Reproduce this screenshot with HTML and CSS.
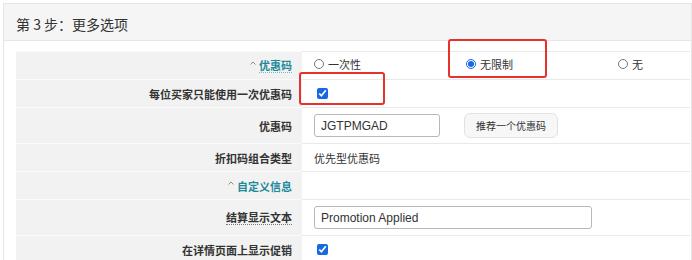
FILE: index.html
```html
<!DOCTYPE html>
<html>
<head>
  <meta charset="UTF-8">
  <title>更多选项</title>
  <link rel="stylesheet" href="styles.css">
</head>
<body>
  <div class="panel">
    <div class="panel-head">第 3 步：更多选项</div>
    <div class="panel-body">
      <div class="row">
        <div class="row-label">
          <svg class="caret" width="6" height="4" viewBox="0 0 6 4"><polyline points="0.5,3.5 3,1 5.5,3.5" fill="none" stroke="#8a8a8a" stroke-width="1"/></svg>
          <a href="#" class="toggle">优惠码</a>
        </div>
        <div class="row-value">
          <div class="choices">
            <label class="choice"><input type="radio" name="usage"> 一次性</label>
            <label class="choice"><input type="radio" name="usage" checked> 无限制</label>
            <label class="choice"><input type="radio" name="usage"> 无</label>
          </div>
        </div>
      </div>
      <div class="row">
        <div class="row-label">每位买家只能使用一次优惠码</div>
        <div class="row-value"><input type="checkbox" class="check" checked></div>
      </div>
      <div class="row row-tall">
        <div class="row-label">优惠码</div>
        <div class="row-value">
          <input type="text" class="text-input code-input" value="JGTPMGAD">
          <button type="button" class="btn">推荐一个优惠码</button>
        </div>
      </div>
      <div class="row">
        <div class="row-label">折扣码组合类型</div>
        <div class="row-value">优先型优惠码</div>
      </div>
      <div class="row">
        <div class="row-label">
          <svg class="caret" width="6" height="4" viewBox="0 0 6 4"><polyline points="0.5,3.5 3,1 5.5,3.5" fill="none" stroke="#8a8a8a" stroke-width="1"/></svg>
          <a href="#" class="toggle plain">自定义信息</a>
        </div>
        <div class="row-value"></div>
      </div>
      <div class="row row-tall">
        <div class="row-label"><span class="hint">结算显示文本</span></div>
        <div class="row-value">
          <input type="text" class="text-input wide-input" value="Promotion Applied">
        </div>
      </div>
      <div class="row">
        <div class="row-label">在详情页面上显示促销</div>
        <div class="row-value"><input type="checkbox" class="check" checked></div>
      </div>
    </div>
  </div>

  <div class="mark mark-unlimited"></div>
  <div class="mark mark-once"></div>
</body>
</html>
```

FILE: styles.css
```css
* {
  box-sizing: border-box;
}
body {
  margin: 0;
  background: #fff;
  color: #333;
  font-family: "Noto Sans CJK SC", sans-serif;
  overflow: hidden;
}
.panel {
  margin: 3px 0 0 3px;
  border: 1px solid #e6e6e6;
  border-bottom: none;
}
.panel-head {
  background: #f5f5f5;
  border-bottom: 1px solid #e6e6e6;
  padding: 10px 12px 6px;
  font-size: 14px;
  line-height: 20px;
  color: #333;
}
.panel-body {
  padding: 10px 1px 0 12px;
}
.row {
  display: flex;
  height: 28px;
}
.row-tall {
  height: 36px;
}
.row-label {
  width: 286px;
  flex: none;
  display: flex;
  align-items: center;
  justify-content: flex-end;
  gap: 3px;
  padding-right: 10px;
  background: #f2f2f2;
  border-top: 1px solid #fafafa;
  font-size: 11px;
  font-weight: bold;
  color: #333;
}
.row-value {
  flex: 1;
  display: flex;
  align-items: center;
  padding-left: 12px;
  border-top: 1px solid #e9e9e9;
  font-size: 11px;
  color: #333;
}
.caret {
  margin-bottom: 5px;
}
.toggle {
  color: #1d8a9b;
  text-decoration: none;
  border-bottom: 1px dotted #7fb8c2;
  line-height: 14px;
}
.toggle.plain {
  border-bottom: none;
}
.hint {
  border-bottom: 1px dotted #777;
  line-height: 14px;
}
.choices {
  display: flex;
  justify-content: space-between;
  width: 329px;
  margin-top: -3px;
}
.choice {
  display: flex;
  align-items: center;
  gap: 4px;
  color: #333;
}
.choice input {
  width: 10px;
  height: 10px;
  margin: 0;
  accent-color: #1668e3;
}
.check {
  width: 11px;
  height: 11px;
  margin: 0 0 0 3px;
  accent-color: #1668e3;
}
.text-input {
  height: 23px;
  border: 1px solid #b8b8b8;
  border-radius: 3px;
  padding: 0 6px;
  font-family: "Liberation Sans", sans-serif;
  font-size: 12px;
  color: #333;
}
.code-input {
  width: 126px;
}
.wide-input {
  width: 278px;
}
.btn {
  margin-left: 24px;
  height: 25px;
  padding: 0 11px;
  background: #f7f7f7;
  border: 1px solid #e2e2e2;
  border-radius: 6px;
  font-family: "Noto Sans CJK SC", sans-serif;
  font-size: 10px;
  color: #333;
}
.mark {
  position: absolute;
  border: 2px solid #e8312b;
  border-radius: 3px;
}
.mark-unlimited {
  left: 448px;
  top: 39px;
  width: 99px;
  height: 39px;
}
.mark-once {
  left: 299px;
  top: 72px;
  width: 86px;
  height: 33px;
}
```
